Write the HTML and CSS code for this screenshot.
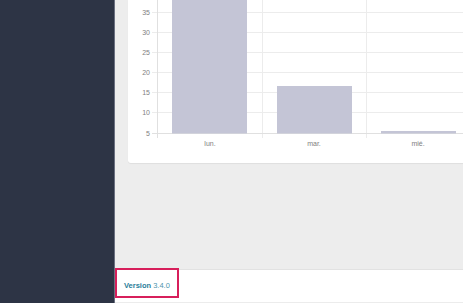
FILE: index.html
```html
<!DOCTYPE html>
<html lang="es">
<head>
    <meta charset="UTF-8">
    <meta name="viewport" content="width=device-width, initial-scale=1.0">
    <title>Panel</title>
    <link rel="stylesheet" href="styles.css">
</head>
<body>

<div class="layout">
    <aside class="sidebar"></aside>

    <div class="main">
        <div class="content">
            <div class="card">
                <svg class="chart" width="340" height="163" viewBox="0 0 340 163">
                    <!-- grid -->
                    <g stroke="#ececec" stroke-width="1">
                        <line x1="24" y1="12.5" x2="340" y2="12.5"/>
                        <line x1="24" y1="32.5" x2="340" y2="32.5"/>
                        <line x1="24" y1="52.5" x2="340" y2="52.5"/>
                        <line x1="24" y1="72.5" x2="340" y2="72.5"/>
                        <line x1="24" y1="92.5" x2="340" y2="92.5"/>
                        <line x1="24" y1="112.5" x2="340" y2="112.5"/>
                        <line x1="134.5" y1="0" x2="134.5" y2="138"/>
                        <line x1="238.5" y1="0" x2="238.5" y2="138"/>
                    </g>
                    <g stroke="#e0e0e0" stroke-width="1">
                        <line x1="24" y1="133.5" x2="340" y2="133.5"/>
                        <line x1="29.5" y1="0" x2="29.5" y2="138"/>
                    </g>
                    <!-- bars -->
                    <g fill="#c4c5d6">
                        <rect x="44" y="-10" width="75" height="143.5"/>
                        <rect x="149" y="86" width="75" height="47.5"/>
                        <rect x="253" y="131" width="75" height="2.5"/>
                    </g>
                    <!-- labels -->
                    <g class="tick" text-anchor="end">
                        <text x="22" y="15">35</text>
                        <text x="22" y="35">30</text>
                        <text x="22" y="55">25</text>
                        <text x="22" y="75">20</text>
                        <text x="22" y="95">15</text>
                        <text x="22" y="115">10</text>
                        <text x="22" y="136">5</text>
                    </g>
                    <g class="tick" text-anchor="middle">
                        <text x="82" y="146">lun.</text>
                        <text x="186" y="146">mar.</text>
                        <text x="290" y="146">mié.</text>
                    </g>
                </svg>
            </div>
        </div>

        <footer class="footer">
            <div class="version"><strong>Version</strong> 3.4.0</div>
        </footer>
    </div>
</div>

</body>
</html>
```

FILE: styles.css
```css
html, body {
    margin: 0;
    padding: 0;
    height: 100%;
}
body {
    font-family: "Liberation Sans", Arial, sans-serif;
    background-color: #ffffff;
    overflow: hidden;
}
.layout {
    display: flex;
    height: 303px;
}
.sidebar {
    width: 114px;
    flex-shrink: 0;
    background-color: #2d3445;
    border-right: 1px solid #6b7080;
}
.main {
    flex: 1;
    display: flex;
    flex-direction: column;
    min-width: 0;
    overflow: hidden;
}
.content {
    height: 270px;
    background-color: #ededed;
    padding-left: 13px;
    border-bottom: 1px solid #e2e2e2;
}
.card {
    width: 340px;
    height: 163px;
    background-color: #fff;
    border-radius: 0 0 3px 3px;
    box-shadow: 0 1px 1px rgba(0, 0, 0, 0.06);
}
.chart {
    display: block;
}
.tick text {
    font-family: "Liberation Sans", Arial, sans-serif;
    font-size: 7px;
    fill: #808080;
}
.footer {
    flex: 1;
    background-color: #fff;
    border-bottom: 1px solid #ececec;
}
.version {
    display: inline-block;
    width: 53px;
    height: 26px;
    margin-top: -2px;
    border: 2px solid #d71f5b;
    font-size: 7.5px;
    line-height: 32px;
    padding-left: 7px;
    box-sizing: content-box;
    color: #4c95ac;
    white-space: nowrap;
    overflow: hidden;
}
.version strong {
    color: #2a7d98;
}
```
